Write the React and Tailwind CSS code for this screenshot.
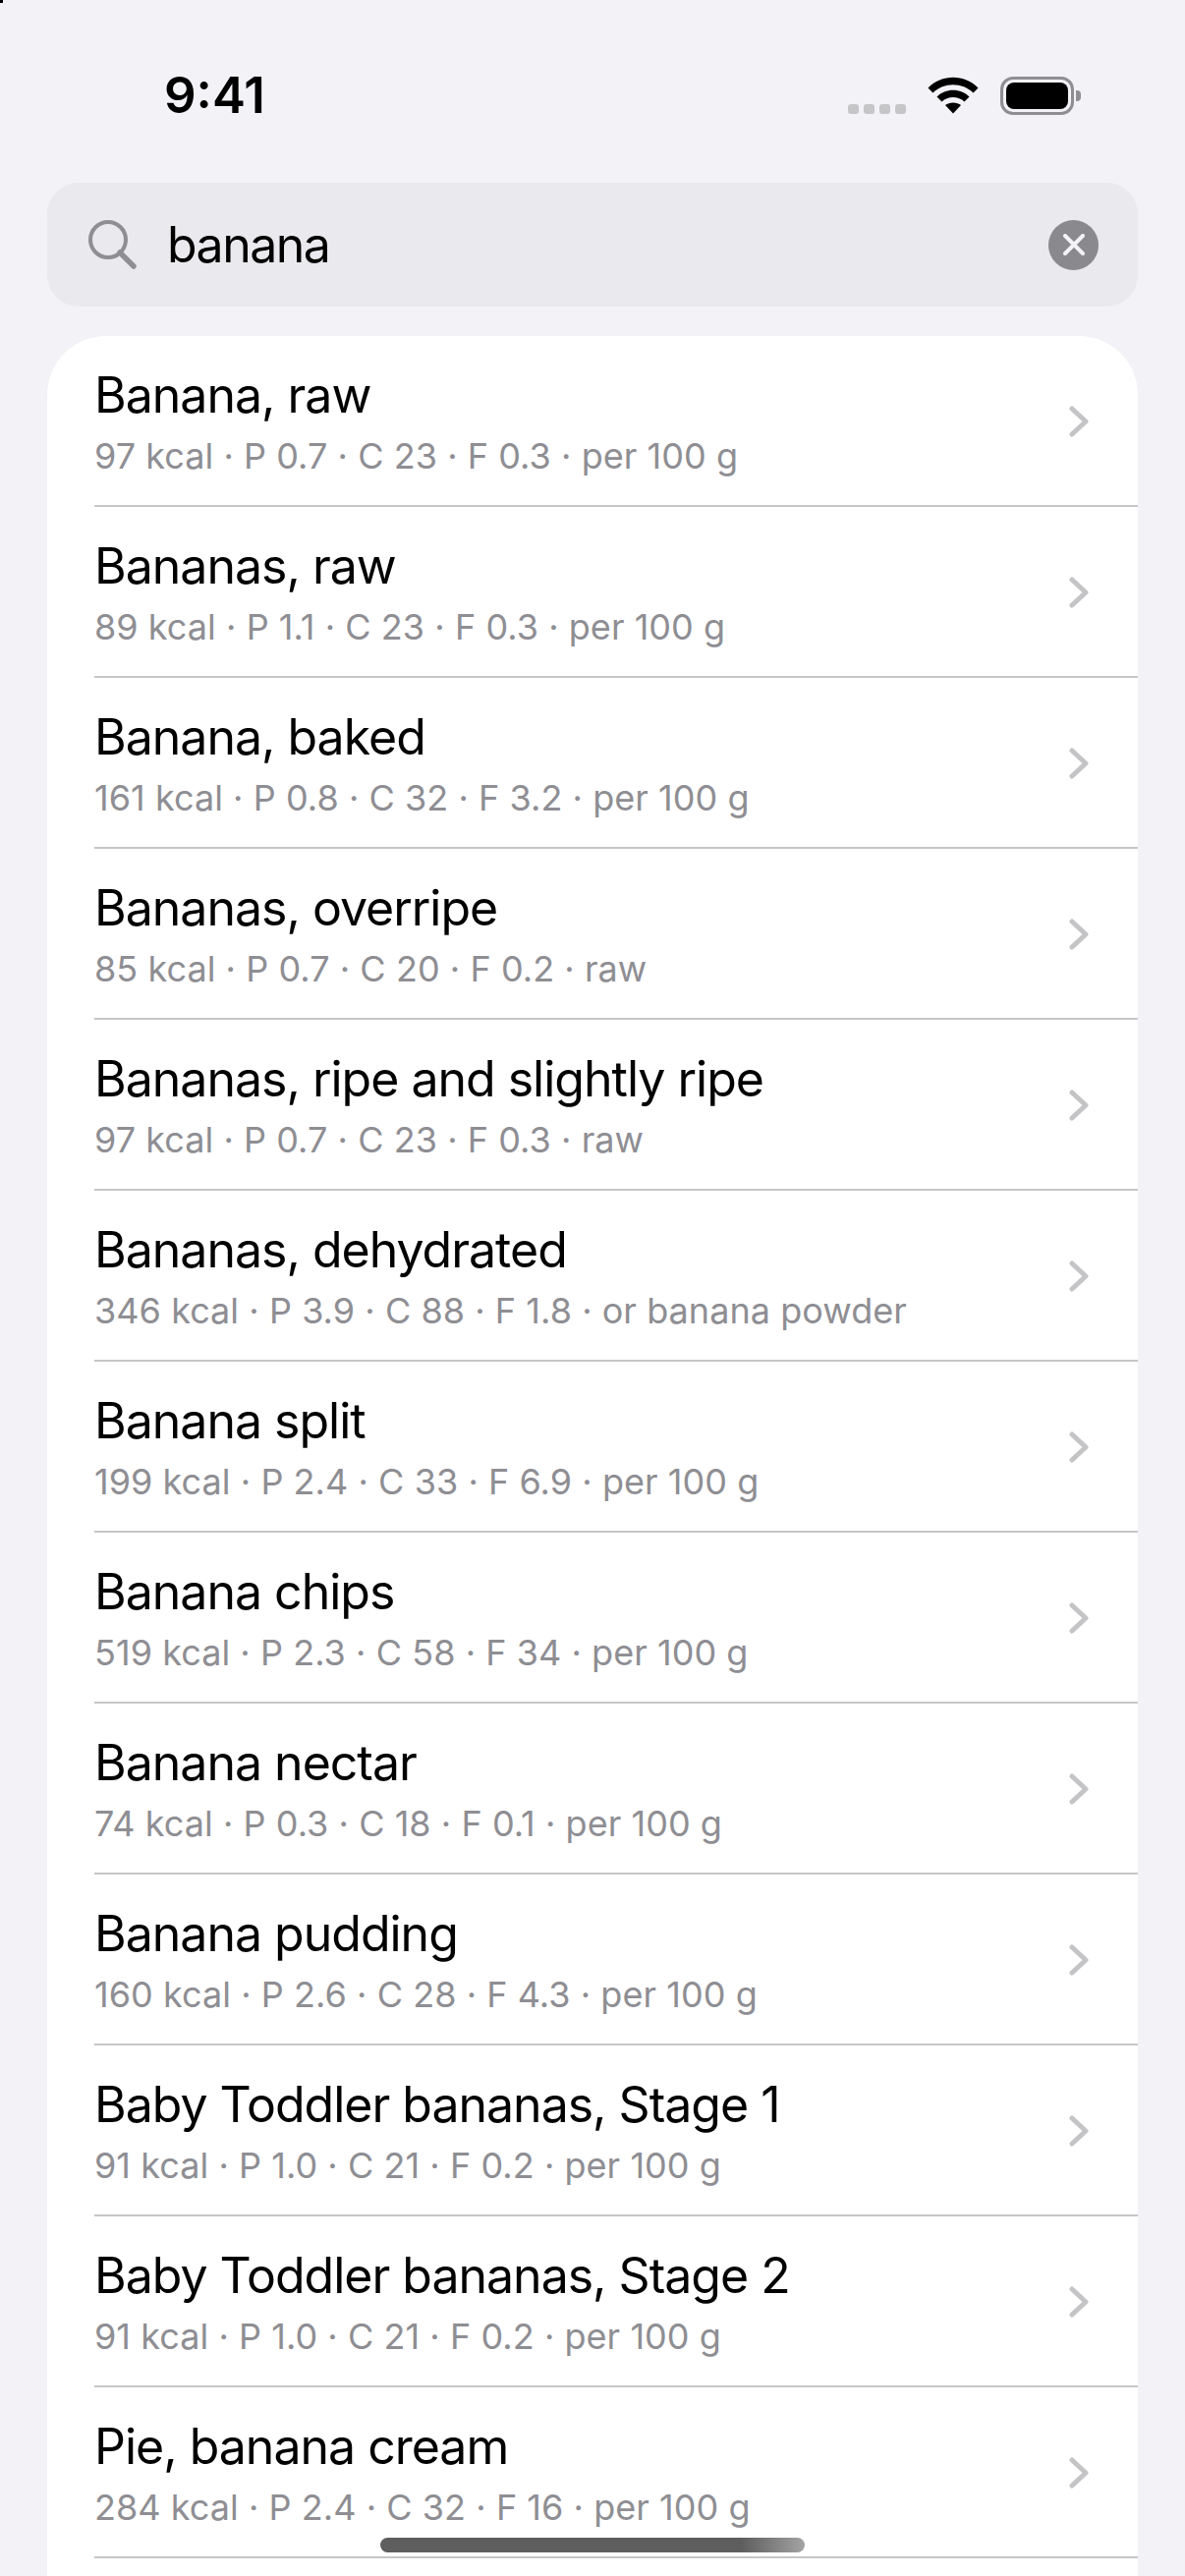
const foods = [
  ['Banana, raw', '97 kcal · P 0.7 · C 23 · F 0.3 · per 100 g'],
  ['Bananas, raw', '89 kcal · P 1.1 · C 23 · F 0.3 · per 100 g'],
  ['Banana, baked', '161 kcal · P 0.8 · C 32 · F 3.2 · per 100 g'],
  ['Bananas, overripe', '85 kcal · P 0.7 · C 20 · F 0.2 · raw'],
  ['Bananas, ripe and slightly ripe', '97 kcal · P 0.7 · C 23 · F 0.3 · raw'],
  ['Bananas, dehydrated', '346 kcal · P 3.9 · C 88 · F 1.8 · or banana powder'],
  ['Banana split', '199 kcal · P 2.4 · C 33 · F 6.9 · per 100 g'],
  ['Banana chips', '519 kcal · P 2.3 · C 58 · F 34 · per 100 g'],
  ['Banana nectar', '74 kcal · P 0.3 · C 18 · F 0.1 · per 100 g'],
  ['Banana pudding', '160 kcal · P 2.6 · C 28 · F 4.3 · per 100 g'],
  ['Baby Toddler bananas, Stage 1', '91 kcal · P 1.0 · C 21 · F 0.2 · per 100 g'],
  ['Baby Toddler bananas, Stage 2', '91 kcal · P 1.0 · C 21 · F 0.2 · per 100 g'],
  ['Pie, banana cream', '284 kcal · P 2.4 · C 32 · F 16 · per 100 g'],
];

function FoodRow({ name, detail }) {
  return (
    <div className="flex h-[174px] shrink-0 items-center pl-[48px]">
      <div className="flex h-full min-w-0 flex-1 items-center border-b-[2px] border-[#c6c6c8] pr-[50px]">
        <div className="flex-1 pt-[2px]">
          <div className="text-[50px] leading-[60px] tracking-[-1px] text-black">{name}</div>
          <div className="mt-[10px] text-[36px] leading-[44px] tracking-[0.05px] text-[#8e8e93]">{detail}</div>
        </div>
        <svg className="mt-[2px]" width="20" height="32" viewBox="0 0 20 32" fill="none" stroke="#c4c4c6" strokeWidth="5" strokeLinecap="round" strokeLinejoin="round">
          <path d="M3 3l14 13L3 29" />
        </svg>
      </div>
    </div>
  );
}

export default function App() {
  return (
    <div className="relative flex h-[2622px] flex-col overflow-hidden bg-[#f2f2f7] font-['Inter',sans-serif]">
      <div className="absolute left-0 top-0 h-[3px] w-[3px] bg-black" />

      {/* Status bar */}
      <div className="flex h-[186px] shrink-0 items-start justify-between pl-[167px] pr-[106px] pt-[66px]">
        <span className="text-[51px] font-semibold leading-[62px] text-black">9:41</span>
        <div className="flex items-start gap-[22px] pt-[12px]">
          <div className="mt-[28px] flex gap-[5px]">
            <span className="h-[10px] w-[11px] rounded-[3px] bg-[#c6c6c8]" />
            <span className="h-[10px] w-[11px] rounded-[3px] bg-[#c6c6c8]" />
            <span className="h-[10px] w-[11px] rounded-[3px] bg-[#c6c6c8]" />
            <span className="h-[10px] w-[11px] rounded-[3px] bg-[#c6c6c8]" />
          </div>
          <svg width="52" height="38" viewBox="0 0 52 38">
            <path d="M0.5 11.5C14 -3 38 -3 51.5 11.5L46.5 16.5C35.5 5.5 16.5 5.5 5.5 16.5Z" fill="#000" />
            <path d="M9.5 20.5C18 11.5 34 11.5 42.5 20.5L37.5 25.5C31.5 19.5 20.5 19.5 14.5 25.5Z" fill="#000" />
            <path d="M18 29C22 25.5 30 25.5 34 29L26 37.5Z" fill="#000" />
          </svg>
          <div className="flex items-center">
            <div className="h-[39px] w-[75px] rounded-[13px] border-[3px] border-[#8e8e93] p-[3px]">
              <div className="h-full w-full rounded-[8px] bg-black" />
            </div>
            <div className="ml-[2px] h-[11px] w-[5px] rounded-r-[4px] bg-[#8e8e93]" />
          </div>
        </div>
      </div>

      {/* Search field */}
      <div className="mx-[48px] flex h-[126px] shrink-0 items-center rounded-[32px] bg-[#e9e9ee] pl-[42px] pr-[40px]">
        <svg width="50" height="50" viewBox="0 0 50 50" fill="none" stroke="#8e8e93" strokeLinecap="round">
          <circle cx="20" cy="20" r="18" strokeWidth="4" />
          <path d="M32 33l14 14" strokeWidth="5.5" />
        </svg>
        <span className="ml-[30px] flex-1 text-[50px] leading-[60px] tracking-[-1.5px] text-black">banana</span>
        <div className="flex h-[51px] w-[51px] items-center justify-center rounded-full bg-[#8a8a8e]">
          <svg width="22" height="22" viewBox="0 0 22 22" fill="none" stroke="#f2f2f7" strokeWidth="4" strokeLinecap="round">
            <path d="M2 2l18 18M20 2L2 20" />
          </svg>
        </div>
      </div>

      {/* Results */}
      <div className="mx-[48px] mt-[30px] flex flex-1 flex-col rounded-t-[60px] bg-white">
        {foods.map(([name, detail]) => (
          <FoodRow key={name} name={name} detail={detail} />
        ))}
      </div>

      {/* Home indicator */}
      <div className="absolute bottom-[24px] left-[387px] h-[15px] w-[432px] rounded-full bg-gradient-to-r from-[#5e5e5e] from-85% to-[#a4a4a4]" />
    </div>
  );
}
